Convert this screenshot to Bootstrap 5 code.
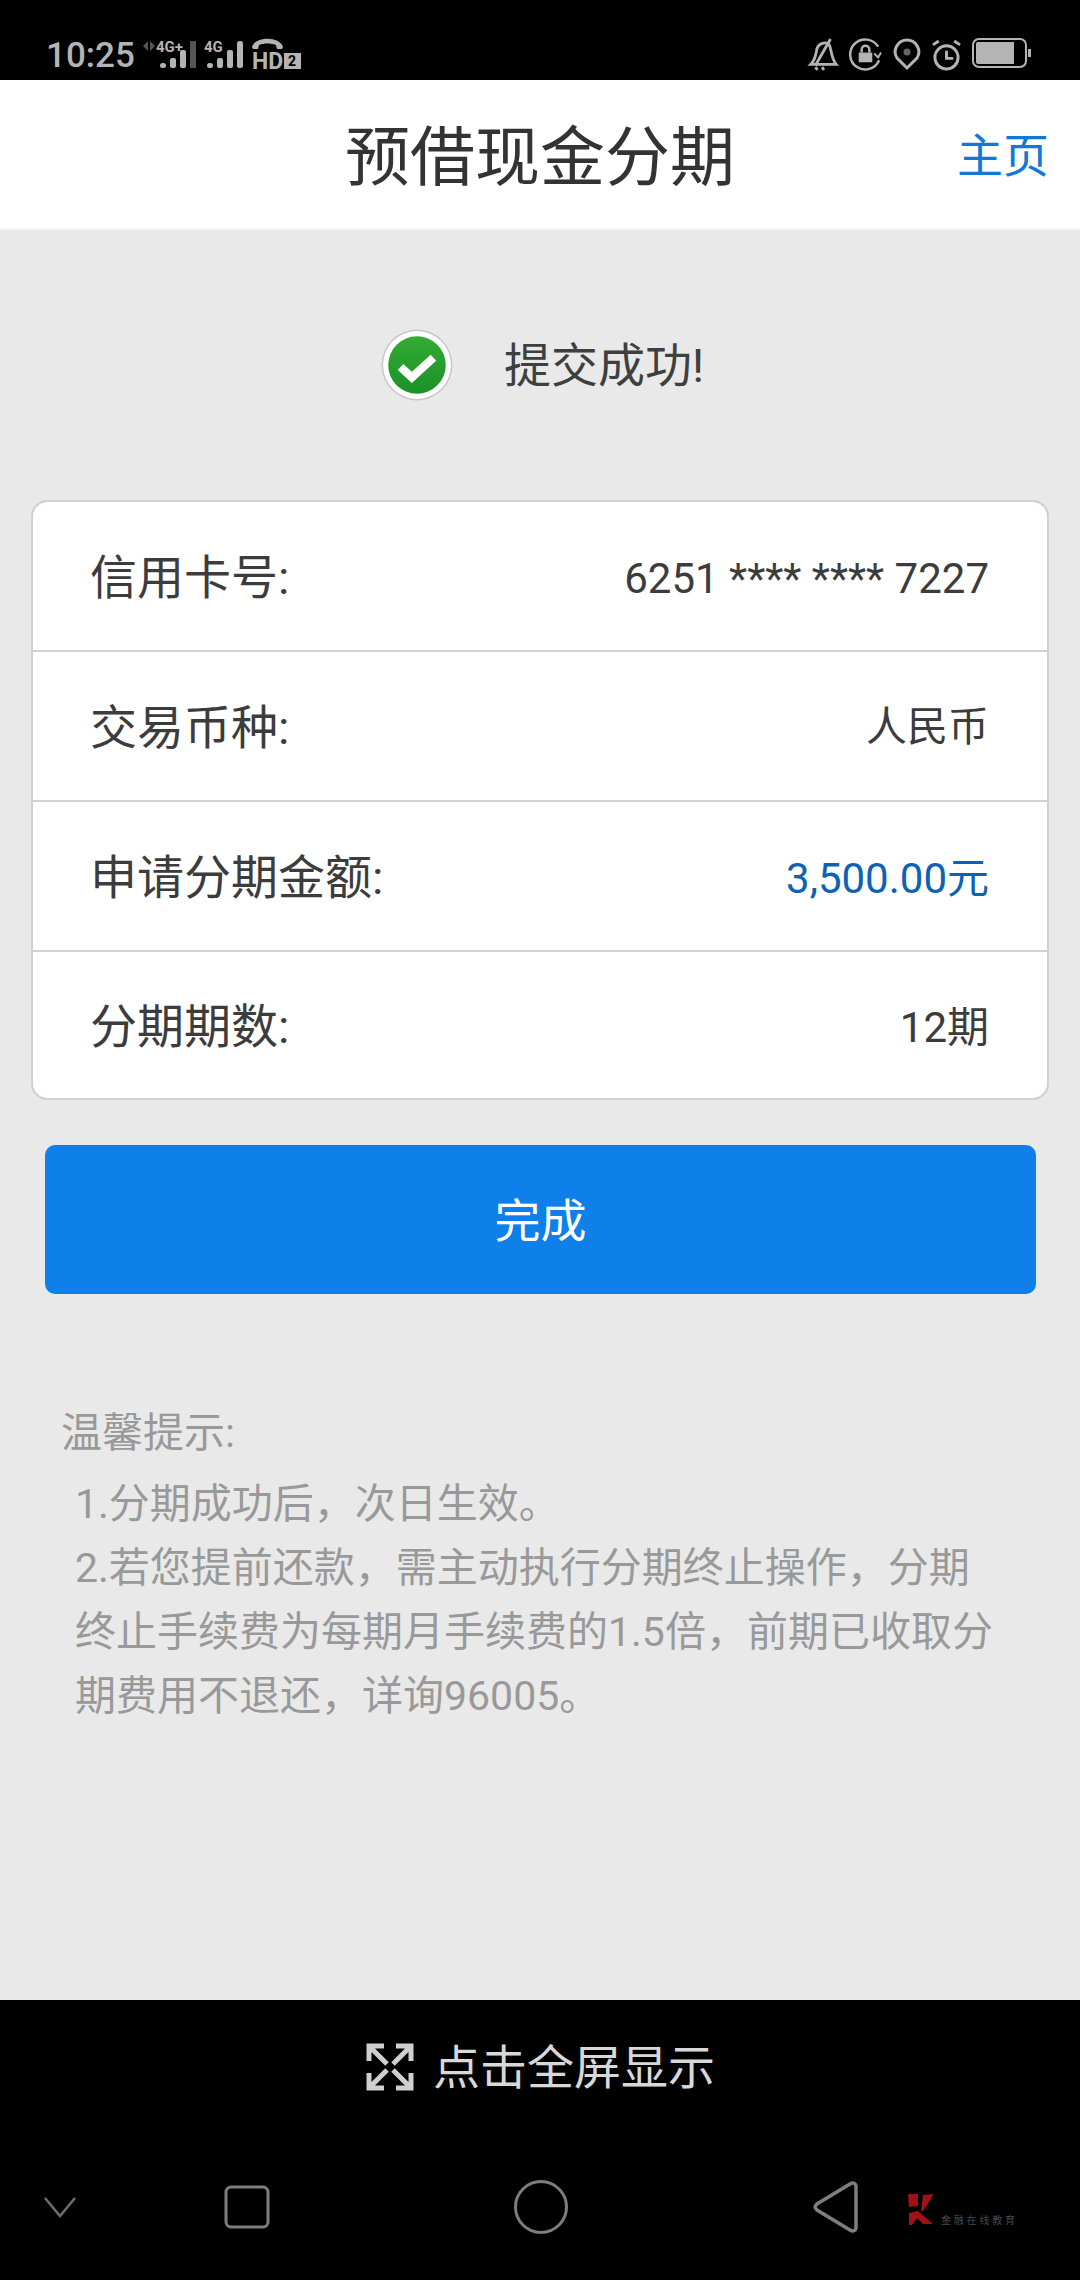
<!DOCTYPE html>
<html lang="zh-CN">
<head>
    <meta charset="UTF-8">
    <meta name="viewport" content="width=device-width, initial-scale=1.0">
    <title>预借现金分期</title>
    <link href="https://cdn.jsdelivr.net/npm/bootstrap@5.3.0/dist/css/bootstrap.min.css" rel="stylesheet">
    <style>
        html, body { margin: 0; background: #000; }
        body {
            width: 1080px;
            height: 2280px;
            overflow: hidden;
            font-family: Roboto, "Noto Sans CJK SC", sans-serif;
            color: #3c3c3c;
        }
        .status-strip { height: 80px; background: #000; color: #b4b4b4; padding: 38px 48px 0 46px; }
        .status-time { font-size: 35px; line-height: 36px; font-weight: 500; width: 90px; margin-right: 5px; }
        .status-strip svg { display: block; overflow: visible; }
        .signal-two { margin-left: 8px; }
        .call-hd { margin-left: 10px; }
        .status-gap { margin-left: 11px; }

        .title-strip {
            height: 150px;
            background: #fff;
            border-bottom: 2px solid #f6f6f6;
            display: grid;
            grid-template-columns: 1fr auto 1fr;
            align-items: center;
        }
        .title-text { font-size: 65px; line-height: 1; color: #333; padding-top: 8px; }
        .home-link { font-size: 46px; line-height: 1; color: #0f78d8; text-decoration: none; text-align: right; padding: 3px 31px 0 0; }

        .page-body { height: 1770px; background: #e9e9e9; }
        .result-line { height: 270px; padding-left: 381px; gap: 51px; }
        .result-text { font-size: 47px; line-height: 1; color: #3f3f3f; }

        .info-list { margin: 0 31px; border-radius: 16px; border: 2px solid #d2d2d2; height: 600px; --bs-list-group-bg: #fff; overflow: hidden; }
        .info-row {
            height: 150px;
            flex-shrink: 0;
            padding: 4px 58px 0 57px;
            border: 0;
            border-bottom: 2px solid #d2d2d2;
            font-size: 47px;
            color: #3c3c3c;
        }
        .info-row:last-child { height: 146px; border-bottom: 0; }
        .info-value { font-size: 42px; }
        .info-cjk { font-size: 41px; }
        .info-money { color: #0d62b4; }

        .done-btn {
            display: block;
            width: 991px;
            height: 149px;
            margin: 45px 0 0 45px;
            padding-top: 10px;
            background: #0f80ea;
            border: 0;
            border-radius: 10px;
            color: #fff;
            font-size: 46px;
        }

        .tips-block { padding: 107px 80px 0 61px; color: #999; font-size: 41px; line-height: 64px; }
        .tips-list { padding: 7px 0 0 14px; }

        .bottom-strip { height: 280px; background: #000; }
        .fullscreen-line { height: 134px; padding-left: 366px; gap: 19px; color: #d8d8d8; font-size: 47px; line-height: 1; }
        .nav-keys { height: 146px; }
        .key-back { margin-left: 42px; }
        .key-square { margin-left: 146px; }
        .key-home { margin-left: 244px; }
        .key-recent { margin-left: 244px; }
        .brand-mark { margin-left: 48px; margin-top: 6px; }
        .brand-text { font-size: 10px; line-height: 1; color: #4a4a4a; letter-spacing: 2.8px; margin-left: 7px; margin-top: 28px; white-space: nowrap; }
    </style>
</head>
<body>
    <div class="status-strip d-flex align-items-start">
        <div class="status-time">10:25</div>
        <svg width="55" height="32" viewBox="0 0 55 32" fill="#b4b4b4">
            <path d="M2 8l5-5v10zM9 3l5 5-5 5z" fill="#555"/>
            <text x="15" y="14" font-family="Roboto, sans-serif" font-size="15" font-weight="700">4G+</text>
            <rect x="19" y="25" width="6" height="5" rx="2.500"/><rect x="29" y="20" width="6" height="10" rx="2"/><rect x="39" y="12" width="6" height="18" rx="2"/><rect x="49" y="3" width="6" height="27" rx="1" fill="#555"/>
        </svg>
        <svg class="signal-two" width="38" height="32" viewBox="0 0 38 32" fill="#b4b4b4">
            <text x="0" y="14" font-family="Roboto, sans-serif" font-size="15" font-weight="700">4G</text>
            <rect x="3" y="25" width="6" height="5" rx="2.500"/><rect x="13" y="20" width="6" height="10" rx="2"/><rect x="23" y="12" width="6" height="18" rx="2"/><rect x="33" y="3" width="6" height="27" rx="2.500"/>
        </svg>
        <svg class="call-hd" width="49" height="33" viewBox="0 0 49 33" fill="#b4b4b4">
            <path d="M0 9C3-2 28-2 31 9l-1 2h-5l-1-4C19 5 12 5 7 7l-1 4H1z"/>
            <text x="0" y="31" font-family="Roboto, sans-serif" font-size="23" font-weight="700">HD</text>
            <rect x="32" y="15" width="17" height="16"/>
            <text x="36" y="28" font-family="Roboto, sans-serif" font-size="14" font-weight="700" fill="#000">2</text>
        </svg>
        <div class="flex-grow-1"></div>
        <svg width="30" height="32" viewBox="0 0 32 34" fill="none" stroke="#b4b4b4" stroke-width="3">
            <path d="M3 28c4-4 5-8 6-14 1-9 11-11 14-6 2 5 2 14 7 20z"/><path d="M8 29L24 1"/><path d="M8 31l2 3M15 31l2 3"/>
        </svg>
        <svg class="status-gap" width="33" height="33" viewBox="0 0 34 34" fill="none" stroke="#b4b4b4" stroke-width="2.500">
            <path d="M31 23A15.500 15.500 0 1 1 30 9"/>
            <path d="M33 15l-3 5-4-4" stroke-width="2"/>
            <rect x="10" y="15" width="14" height="10" fill="#b4b4b4" stroke="none"/>
            <path d="M13 15v-3a4 4 0 0 1 8 0v3"/>
        </svg>
        <svg class="status-gap" width="28" height="32" viewBox="0 0 28 32" fill="none" stroke="#b4b4b4" stroke-width="3">
            <path d="M14 30L4 20C-1 12 5 2 14 2s15 10 10 18z"/><circle cx="14" cy="14" r="3.500" fill="#666" stroke="none"/>
        </svg>
        <svg class="status-gap" width="29" height="33" viewBox="0 0 30 34" fill="none" stroke="#b4b4b4" stroke-width="3">
            <circle cx="15" cy="20" r="12"/><path d="M15 13v8h7"/><path d="M1 7l6-4M23 3l6 4"/>
        </svg>
        <svg class="status-gap" width="60" height="32" viewBox="0 0 60 32" fill="none">
            <rect x="1" y="1" width="53" height="28" rx="6" stroke="#b4b4b4" stroke-width="2"/>
            <path d="M6 4h36v22H6a2 2 0 0 1-2-2V6a2 2 0 0 1 2-2z" fill="#b4b4b4"/>
            <rect x="56" y="11" width="3" height="8" fill="#b4b4b4"/>
        </svg>
    </div>

    <div class="title-strip">
        <div></div>
        <div class="title-text">预借现金分期</div>
        <a class="home-link" href="#">主页</a>
    </div>

    <main class="page-body">
        <div class="result-line d-flex align-items-center">
            <svg width="72" height="72" viewBox="0 0 70 70">
                <defs>
                    <linearGradient id="okGreen" x1="0" y1="0" x2="0" y2="1">
                        <stop offset="0" stop-color="#33ab33"/><stop offset="1" stop-color="#1a9127"/>
                    </linearGradient>
                </defs>
                <circle cx="35" cy="35" r="34.500" fill="#c8c8c8"/>
                <circle cx="35" cy="35" r="33" fill="#fff"/>
                <circle cx="35" cy="35" r="28" fill="url(#okGreen)"/>
                <path d="M19 37l11 10 21-19" fill="none" stroke="#fff" stroke-width="8"/>
            </svg>
            <div class="result-text">提交成功!</div>
        </div>

        <div class="list-group info-list">
            <div class="list-group-item info-row d-flex justify-content-between align-items-center">
                <span>信用卡号:</span><span class="info-value">6251 **** **** 7227</span>
            </div>
            <div class="list-group-item info-row d-flex justify-content-between align-items-center">
                <span>交易币种:</span><span class="info-value info-cjk">人民币</span>
            </div>
            <div class="list-group-item info-row d-flex justify-content-between align-items-center">
                <span>申请分期金额:</span><span class="info-value info-money">3,500.00元</span>
            </div>
            <div class="list-group-item info-row d-flex justify-content-between align-items-center">
                <span>分期期数:</span><span class="info-value">12期</span>
            </div>
        </div>

        <button type="button" class="btn btn-primary done-btn">完成</button>

        <div class="tips-block">
            <div>温馨提示:</div>
            <div class="tips-list">
                <div>1.分期成功后，次日生效。</div>
                <div>2.若您提前还款，需主动执行分期终止操作，分期终止手续费为每期月手续费的1.5倍，前期已收取分期费用不退还，详询96005。</div>
            </div>
        </div>
    </main>

    <div class="bottom-strip">
        <div class="fullscreen-line d-flex align-items-center">
            <svg width="48" height="48" viewBox="0 0 48 48" fill="none" stroke="#cfcfcf" stroke-width="5">
                <path d="M3 18V3h15M5 5l16 16"/>
                <path d="M45 18V3H30M43 5L27 21"/>
                <path d="M3 30v15h15M5 43l16-16"/>
                <path d="M45 30v15H30M43 43L27 27"/>
            </svg>
            <span>点击全屏显示</span>
        </div>
        <div class="nav-keys d-flex align-items-center">
            <svg class="key-back" width="36" height="22" viewBox="0 0 36 22" fill="none" stroke="#6e6e6e" stroke-width="2.500"><path d="M3 2l15 18L33 2"/></svg>
            <svg class="key-square" width="46" height="44" viewBox="0 0 46 44" fill="none" stroke="#7e7e7e" stroke-width="3"><rect x="2" y="2" width="42" height="40" rx="5"/></svg>
            <svg class="key-home" width="54" height="54" viewBox="0 0 54 54" fill="none" stroke="#7e7e7e" stroke-width="3"><circle cx="27" cy="27" r="25.500"/></svg>
            <svg class="key-recent" width="46" height="52" viewBox="0 0 46 52" fill="none" stroke="#7e7e7e" stroke-width="3.500"><path d="M3 26c0-1 1-2 2-3L38 3c3-2 6-1 6 3v40c0 4-3 5-6 3L5 29c-1-1-2-2-2-3z"/></svg>
            <svg class="brand-mark" width="28" height="32" viewBox="0 0 28 32" fill="#a01216">
                <path d="M2 0h10v12l-9 1zM17 1l10-1-2 5-8 12h-2zM3 19l9-2v6l-6 8H3zM12 17l15 13H17l-6-6z"/>
            </svg>
            <span class="brand-text">金融在线教育</span>
        </div>
    </div>

    <script src="https://cdn.jsdelivr.net/npm/bootstrap@5.3.0/dist/js/bootstrap.bundle.min.js"></script>
</body>
</html>
